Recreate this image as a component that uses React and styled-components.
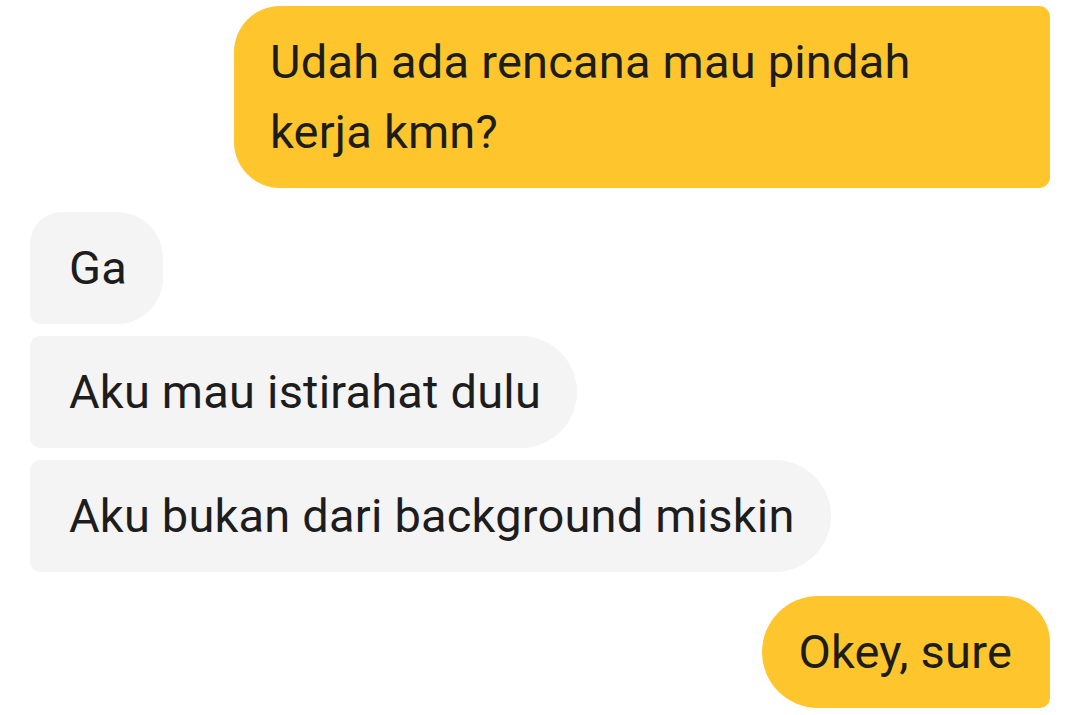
import styled, { createGlobalStyle } from 'styled-components';

const GlobalStyle=createGlobalStyle`
	html,body{
		margin:0;
		padding:0;
		background:#ffffff;
	}
	body{
		font-family:Roboto,"Noto Sans",sans-serif;
		color:#1d1d1d;
	}
`

const Thread=styled.div`
	display:flex;
	flex-direction:column;
	padding:6px 30px 0 30px;
	width:1080px;
	box-sizing:border-box;
`

const Group=styled.div`
	display:flex;
	flex-direction:column;
	align-items:${p=>p.$mine ? 'flex-end' : 'flex-start'};
	gap:12px;
	margin-bottom:24px;
`

const Bubble=styled.div`
	box-sizing:border-box;
	max-width:816px;
	padding:21px ${p=>p.$mine ? '38px 21px 36px' : '36px 21px 39px'};
	font-size:47px;
	line-height:70px;
	letter-spacing:0.2px;
	background:${p=>p.$mine ? '#fec52c' : '#f4f4f4'};
	border-radius:${p=>p.$radius};
`

const messages=[
	{mine:true,items:[
		{text:'Udah ada rencana mau pindah kerja kmn?',radius:'46px 11px 11px 46px'},
	]},
	{mine:false,items:[
		{text:'Ga',radius:'32px 46px 46px 10px'},
		{text:'Aku mau istirahat dulu',radius:'10px 56px 56px 10px'},
		{text:'Aku bukan dari background miskin',radius:'10px 56px 56px 10px'},
	]},
	{mine:true,items:[
		{text:'Okey, sure',radius:'56px 46px 10px 56px'},
	]},
]

export default function App(){
	return(
		<Thread>
			<GlobalStyle />
			{
				messages.map((group,index)=>{
					return <Group key={index} $mine={group.mine}>
						{group.items.map((msg,i)=>(
							<Bubble key={i} $mine={group.mine} $radius={msg.radius}>{msg.text}</Bubble>
						))}
					</Group>
				})
			}
		</Thread>
	)
}
